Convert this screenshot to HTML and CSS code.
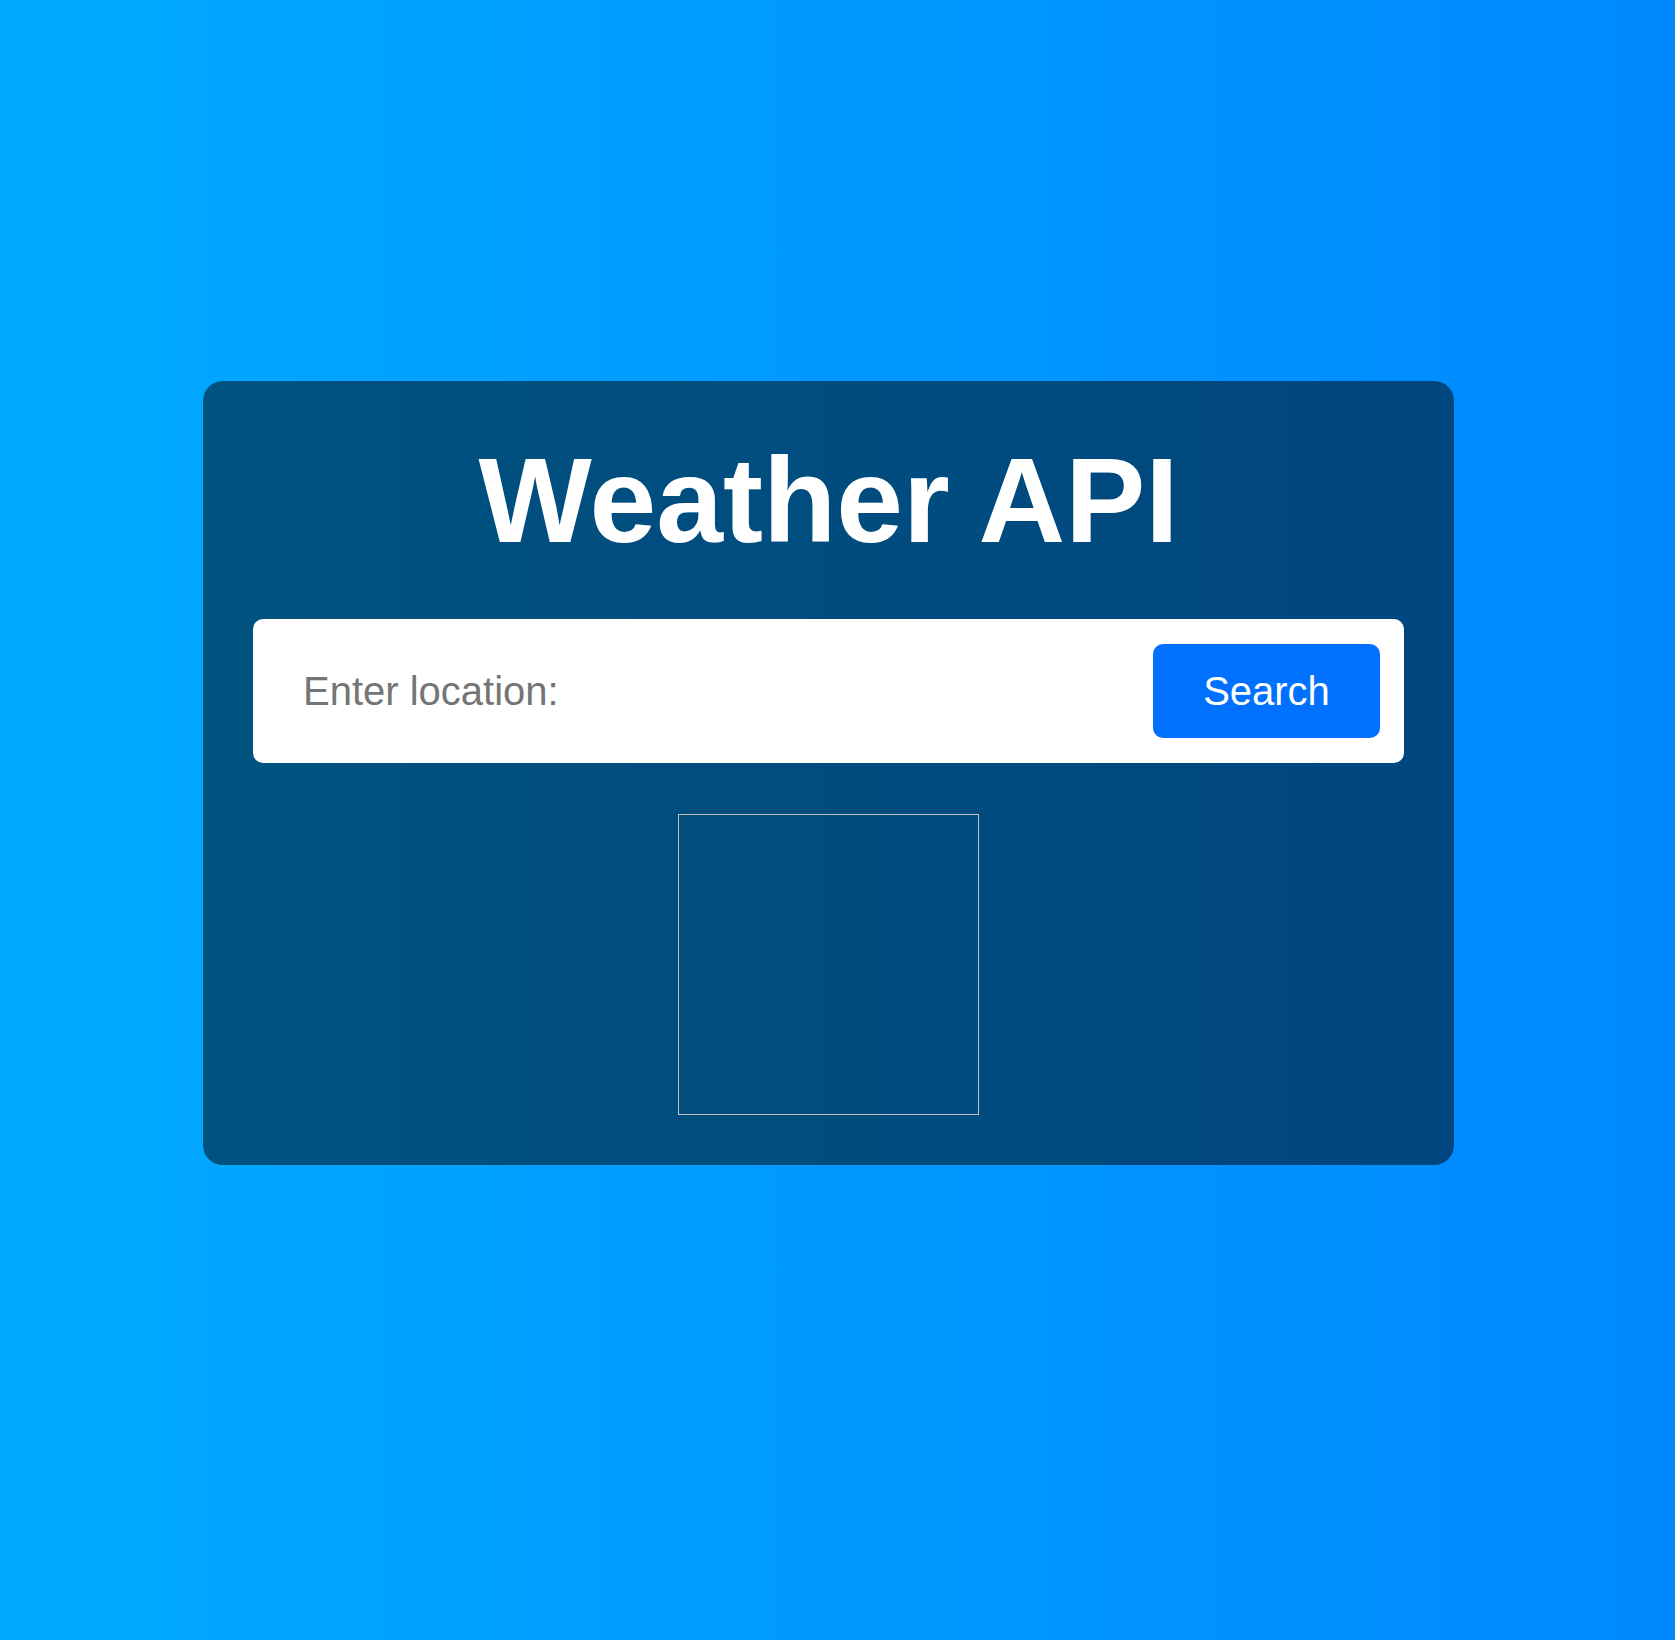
FILE: index.html
```html
<!DOCTYPE html>
<html lang="en">
<head>
<meta charset="utf-8">
<title>Weather API</title>
<link rel="stylesheet" href="styles.css">
</head>
<body>
  <main class="card">
    <h1 class="title">Weather API</h1>
    <form class="search" onsubmit="return false;">
      <input class="search-input" type="text" placeholder="Enter location:">
      <button class="search-btn" type="submit">Search</button>
    </form>
    <div class="result">
      <div class="weather-icon"></div>
    </div>
  </main>
</body>
</html>
```

FILE: styles.css
```css
* { box-sizing: border-box; }

html, body {
  height: 100%;
}

body {
  margin: 0;
  min-height: 1640px;
  background: linear-gradient(to right, #00aaff, #0088ff);
  font-family: "Liberation Sans", Arial, sans-serif;
  padding: 381px 221px 0 203px;
}

.card {
  width: 1251px;
  padding: 50px;
  background: rgba(0, 0, 0, 0.5);
  border-radius: 20px;
  display: flex;
  flex-direction: column;
  align-items: stretch;
}

.title {
  margin: 0 0 50px;
  font-size: 120px;
  font-weight: bold;
  line-height: 138px;
  color: #ffffff;
  text-align: center;
}

.search {
  display: flex;
  align-items: center;
  height: 144px;
  background: #ffffff;
  border-radius: 10px;
  padding: 25px 24px 25px 50px;
  gap: 20px;
}

.search-input {
  flex: 1;
  border: none;
  outline: none;
  background: transparent;
  font-family: "Liberation Sans", Arial, sans-serif;
  font-size: 40px;
  color: #333;
  padding: 0;
}

.search-input::placeholder {
  color: #757575;
}

.search-btn {
  width: 227px;
  height: 94px;
  border: none;
  border-radius: 10px;
  background: #0070ff;
  color: #ffffff;
  font-family: "Liberation Sans", Arial, sans-serif;
  font-size: 40px;
  cursor: pointer;
}

.result {
  display: flex;
  justify-content: center;
  margin-top: 51px;
}

.weather-icon {
  width: 301px;
  height: 301px;
  border: 1px solid #c6c0ba;
}
```
